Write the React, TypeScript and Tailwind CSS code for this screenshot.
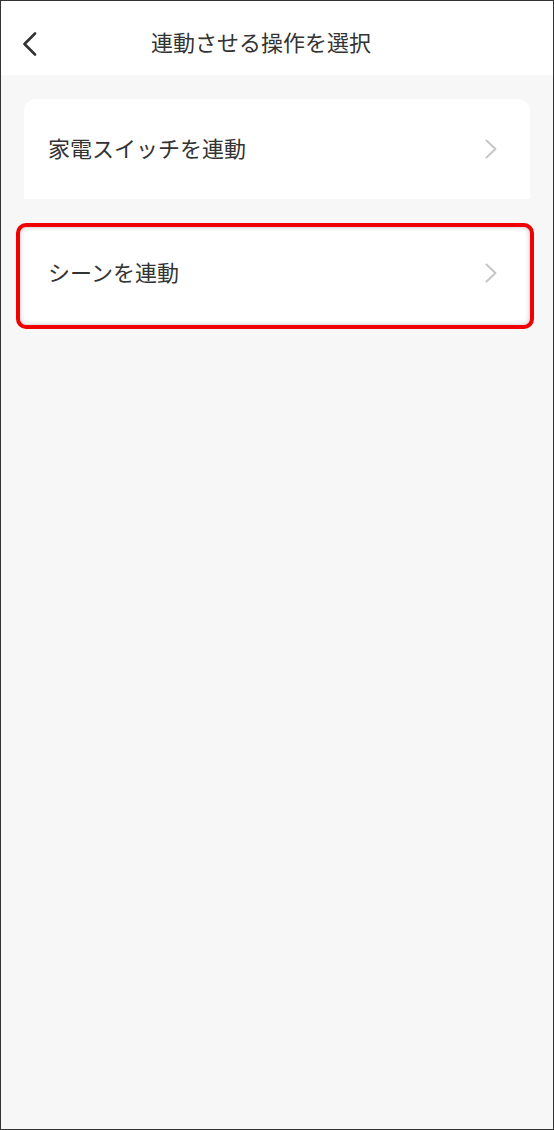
const font = { fontFamily: '"Noto Sans CJK JP", "Noto Sans", sans-serif' };

function Chevron({ color = "#c6c6c6" }: { color?: string }) {
  return (
    <svg width="12" height="20" viewBox="0 0 12 20" fill="none">
      <path d="M1.5 1.5 L10.5 10 L1.5 18.5" stroke={color} strokeWidth="2" strokeLinecap="round" strokeLinejoin="round" />
    </svg>
  );
}

export default function App() {
  return (
    <div
      className="w-[554px] h-[1130px] border border-[#333] bg-[#f7f7f7] overflow-hidden text-[#333]"
      style={font}
    >
      {/* header */}
      <div className="relative h-[74px] bg-white flex items-center justify-center pr-[32px]">
        <button className="absolute left-[21px] top-[31px]">
          <svg width="16" height="24" viewBox="0 0 16 24" fill="none">
            <path d="M13 1.5 L2.5 12 L13 22.5" stroke="#333" strokeWidth="2.6" strokeLinecap="round" strokeLinejoin="round" />
          </svg>
        </button>
        <h1 className="text-[22px] leading-none mt-[6px]">連動させる操作を選択</h1>
      </div>

      {/* list */}
      <div className="pt-[24px]">
        <div className="mx-[23px] h-[100px] bg-white rounded-t-[12px] flex items-center justify-between pl-[24px] pr-[33px]">
          <span className="text-[22px] leading-none mb-[4px]">家電スイッチを連動</span>
          <Chevron />
        </div>

        <div className="mt-[24px] ml-[15px] w-[518px] h-[106px] border-[4px] border-[#f00000] rounded-[10px] bg-white shadow-[inset_0_0_5px_rgba(0,0,0,0.25)] flex items-center justify-between pl-[28px] pr-[33px] pb-[6px]">
          <span className="text-[22px] leading-none mb-[4px]">シーンを連動</span>
          <Chevron />
        </div>
      </div>
    </div>
  );
}
